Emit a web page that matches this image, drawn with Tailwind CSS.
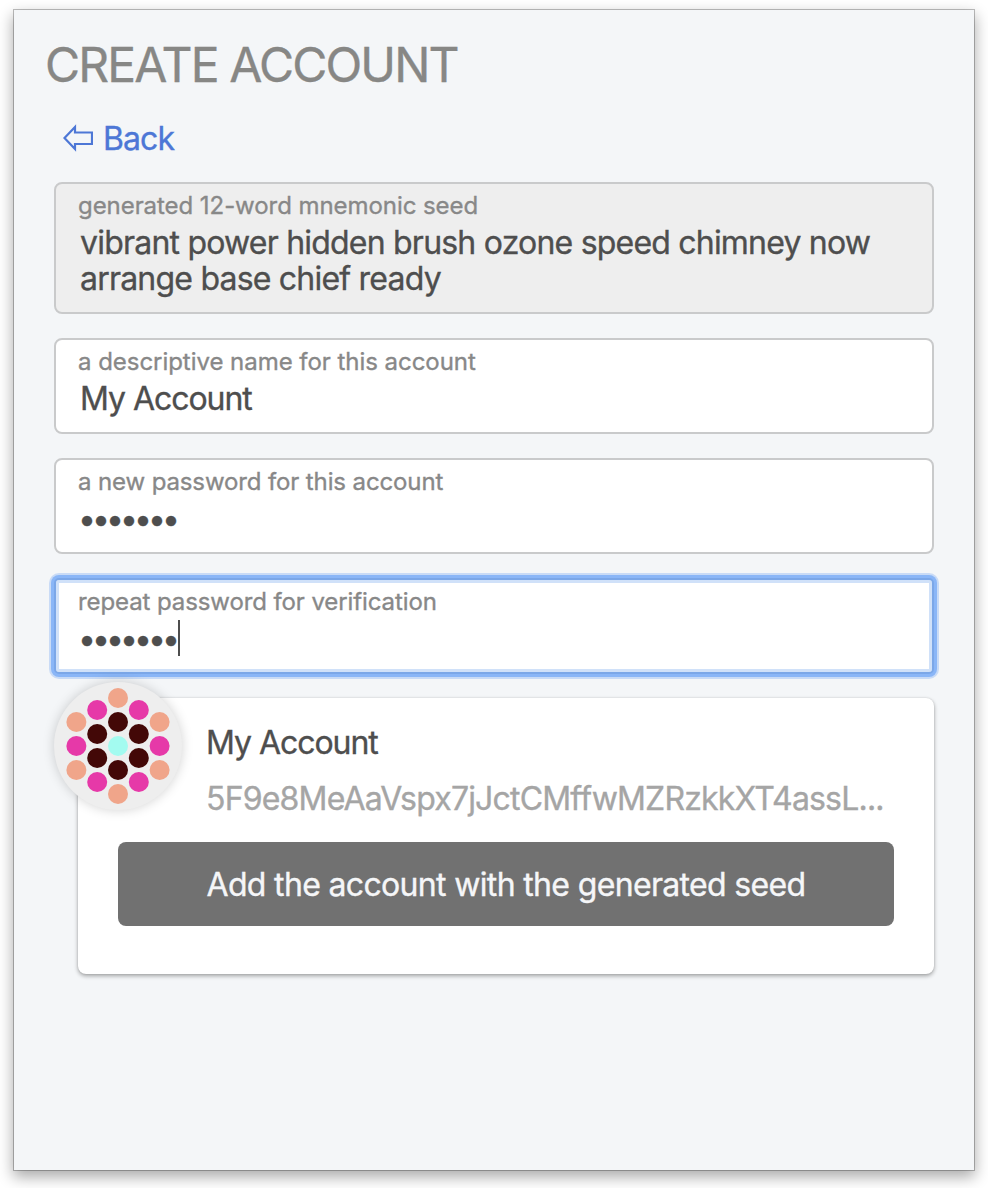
<!DOCTYPE html>
<html lang="en">
<head>
<meta charset="utf-8">
<title>Create account</title>
<script src="https://cdn.jsdelivr.net/npm/@tailwindcss/browser@4"></script>
</head>
<body class="bg-white w-[988px] h-[1188px] overflow-hidden pt-[10px] pl-[14px] font-['Inter',sans-serif] text-[#4e4e4e] [-webkit-text-stroke:0.35px_currentColor]">
<main class="w-[960px] h-[1160px] bg-[#f4f6f8] shadow-[0_0_0_1px_#00000040,0_6px_14px_1px_#00000055] px-10">
<h1 class="-ml-[9px] pt-[27px] h-24 text-[48px] leading-[56px] tracking-[-1.83px] text-[#878785] whitespace-nowrap">CREATE ACCOUNT</h1>
<a class="flex h-[76px] pt-[13px] pl-[9px] text-[32px] leading-[40px] tracking-[-0.9px] text-[#4d77d6]"><svg class="mt-1 mr-[10px]" width="30" height="30" viewBox="0 0 30 30" fill="none" stroke="currentColor" stroke-width="2.200"><path d="M1.500 15L12 4v5.500H29V21H12v5z"/></svg>Back</a>
<div class="flex flex-col gap-6">
<section class="h-[132px] rounded-lg border-2 border-[#c9cacb] bg-[#eee] px-[22px] pt-2">
<div class="text-[24px] leading-[28px] tracking-[-0.06px] text-[#888]">generated 12-word mnemonic seed</div>
<div class="pl-[2px] pt-[5px] text-[32px] leading-[36px] tracking-[-0.79px] whitespace-nowrap">vibrant power hidden brush ozone speed chimney now<br>arrange base chief ready</div>
</section>
<section class="h-24 rounded-lg border-2 border-[#c9cacb] bg-white px-[22px] pt-2">
<div class="text-[24px] leading-[28px] tracking-[-0.04px] text-[#888]">a descriptive name for this account</div>
<div class="pl-[2px] pt-[5px] text-[32px] leading-[36px] tracking-[-1.05px]">My Account</div>
</section>
<section class="h-24 rounded-lg border-2 border-[#c9cacb] bg-white px-[22px] pt-2">
<div class="text-[24px] leading-[28px] tracking-[-0.12px] text-[#888]">a new password for this account</div>
<div class="pt-[5px] text-[32px] leading-[36px] tracking-[-4px]">•••••••</div>
</section>
<section class="h-24 rounded-[5px] border-2 border-[#7ba7e8] bg-white px-[22px] pt-2 shadow-[0_0_0_3px_#8ab6f7,0_0_0_5px_#c9dbf6,inset_0_0_0_3px_#d0e1f9]">
<div class="text-[24px] leading-[28px] tracking-[-0.1px] text-[#888]">repeat password for verification</div>
<div class="flex pt-[4px] text-[32px] leading-[38px] tracking-[-4px]"><span class="w-[100px]">•••••••</span><span class="w-[2px] h-9 bg-[#4e4e4e]"></span></div>
</section>
<section class="relative ml-6 h-[276px] rounded-lg bg-white px-10 pt-[25px] shadow-[0_2px_4px_#00000055,0_0_2px_#00000020]">
<svg class="absolute left-[-24px] top-[-16px] rounded-full bg-[#eee] shadow-[0_0_12px_#0000002e]" width="128" height="128" viewBox="-64 -64 128 128">
<g fill="#f0a58a"><circle cy="-48" r="10"/><circle cy="48" r="10"/><circle cx="-41.600" cy="-24" r="10"/><circle cx="41.600" cy="-24" r="10"/><circle cx="-41.600" cy="24" r="10"/><circle cx="41.600" cy="24" r="10"/></g>
<g fill="#e639a8"><circle cx="-20.800" cy="-36" r="10"/><circle cx="20.800" cy="-36" r="10"/><circle cx="-41.600" r="10"/><circle cx="41.600" r="10"/><circle cx="-20.800" cy="36" r="10"/><circle cx="20.800" cy="36" r="10"/></g>
<g fill="#430807"><circle cy="-24" r="10"/><circle cy="24" r="10"/><circle cx="-20.800" cy="-12" r="10"/><circle cx="20.800" cy="-12" r="10"/><circle cx="-20.800" cy="12" r="10"/><circle cx="20.800" cy="12" r="10"/></g>
<circle r="10" fill="#a3fbf0"/>
</svg>
<div class="pl-[88px] text-[32px] leading-[40px] tracking-[-1.05px]">My Account</div>
<div class="pl-[88px] pt-4 text-[32px] leading-[40px] tracking-[-0.81px] text-[#a5a5a5] whitespace-nowrap">5F9e8MeAaVspx7jJctCMffwMZRzkkXT4assL...</div>
<button class="mt-[23px] block h-[84px] w-full rounded-lg bg-[#717171] pt-[2px] text-[32px] leading-[40px] tracking-[-0.66px] text-[#f5f6f8]">Add the account with the generated seed</button>
</section>
</div>
</main>
</body>
</html>
